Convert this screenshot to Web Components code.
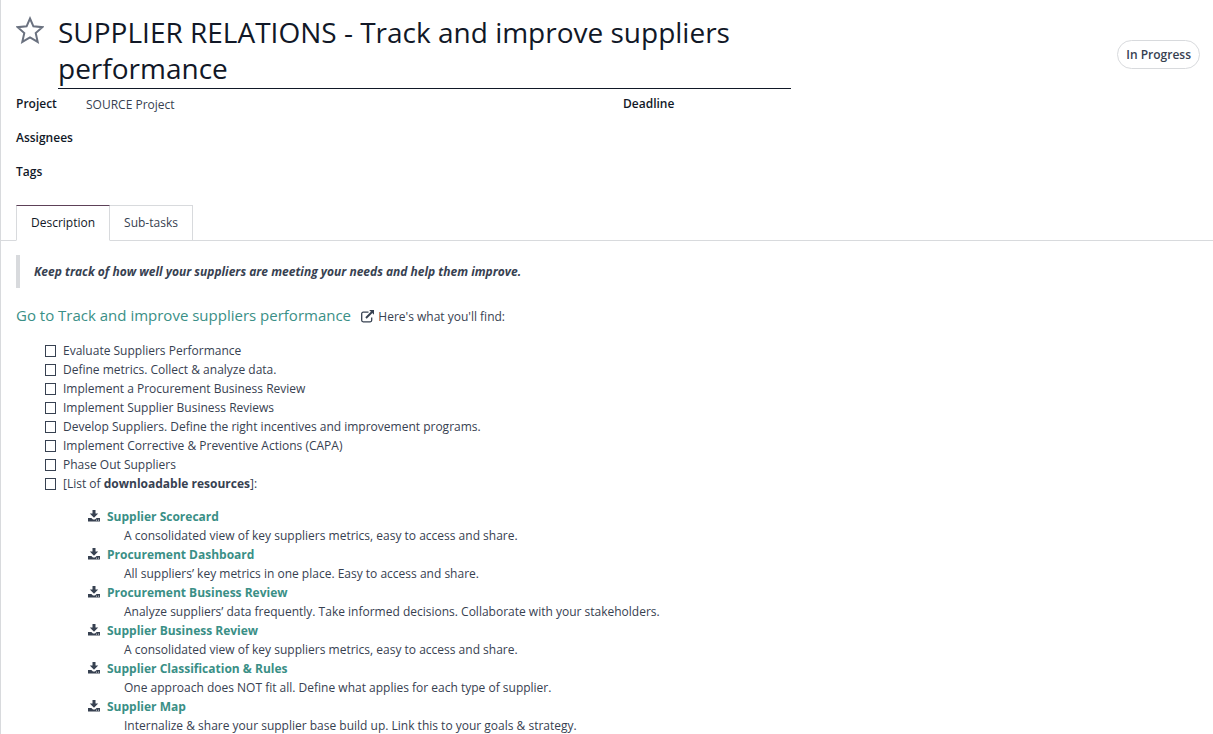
<!DOCTYPE html>
<html lang="en">
<head>
<meta charset="utf-8">
<title>Task</title>
<style>
  body {
    margin: 0;
    background: #fff;
    color: #374151;
    font: 12px/19px "Open Sans", "Noto Sans", sans-serif;
    --ink: #111827;
    --line: #d8dadd;
    --link: #3a8f86;
    --accent: #5d4158;
  }
</style>
</head>
<body>
<task-form></task-form>

<template id="task-form">
  <style>
    :host { display: block; box-sizing: border-box; min-height: 100vh; border-left: 1px solid var(--line); }
    header { display: grid; grid-template-columns: 2fr 1fr; column-gap: 22px; padding: 14px 13px 0 15px; }
    .status { justify-self: end; margin-top: 26px; align-self: start; }
    .groups { display: grid; grid-template-columns: 1fr 1fr; column-gap: 30px; padding: 5px 13px 0 15px; }
    task-tabs { margin-top: 9px; }
    main { display: block; padding: 14px 13px 0 15px; }
    blockquote { margin: 0; padding: 7px 0 7px 14px; border-left: 4px solid var(--line); font-weight: 700; font-style: italic; }
    .intro { margin: 16px 0 13px; line-height: 22px; }
    .intro a { color: var(--link); font-size: 15px; text-decoration: none; }
    .intro svg { width: 14px; height: 13px; margin: 0 0 0 7px; vertical-align: -2px; }
    ul { list-style: none; margin: 0; padding: 0 0 0 29px; }
    .files { padding: 14px 0 0 72px; }
  </style>
  <header>
    <task-title value="SUPPLIER RELATIONS - Track and improve suppliers performance"></task-title>
    <status-pill class="status">In Progress</status-pill>
  </header>
  <div class="groups">
    <div>
      <form-field label="Project">SOURCE Project</form-field>
      <form-field label="Assignees"></form-field>
      <form-field label="Tags"></form-field>
    </div>
    <form-field label="Deadline"></form-field>
  </div>
  <task-tabs></task-tabs>
  <main>
    <blockquote>Keep track of how well your suppliers are meeting your needs and help them improve.</blockquote>
    <p class="intro"><a href="#performance">Go to Track and improve suppliers performance</a>
      <svg viewBox="0 0 14 13" aria-hidden="true"><path d="M7.500 2.200H2.200A1.500 1.500 0 0 0 .700 3.700v6.600A1.500 1.500 0 0 0 2.200 11.800h7A1.500 1.500 0 0 0 10.700 10.300V7.500" fill="none" stroke="#374151" stroke-width="1.300"/><path d="M5 8 11 2" fill="none" stroke="#374151" stroke-width="1.900"/><path d="M8.200 0H13V4.800Z" fill="#374151"/></svg>
      Here's what you'll find:</p>
    <ul>
      <check-item>Evaluate Suppliers Performance</check-item>
      <check-item>Define metrics. Collect &amp; analyze data.</check-item>
      <check-item>Implement a Procurement Business Review</check-item>
      <check-item>Implement Supplier Business Reviews</check-item>
      <check-item>Develop Suppliers. Define the right incentives and improvement programs.</check-item>
      <check-item>Implement Corrective &amp; Preventive Actions (CAPA)</check-item>
      <check-item>Phase Out Suppliers</check-item>
      <check-item>[List of <strong>downloadable resources</strong>]:</check-item>
    </ul>
    <ul class="files">
      <download-item name="Supplier Scorecard">A consolidated view of key suppliers metrics, easy to access and share.</download-item>
      <download-item name="Procurement Dashboard">All suppliers’ key metrics in one place. Easy to access and share.</download-item>
      <download-item name="Procurement Business Review">Analyze suppliers’ data frequently. Take informed decisions. Collaborate with your stakeholders.</download-item>
      <download-item name="Supplier Business Review">A consolidated view of key suppliers metrics, easy to access and share.</download-item>
      <download-item name="Supplier Classification &amp; Rules">One approach does NOT fit all. Define what applies for each type of supplier.</download-item>
      <download-item name="Supplier Map">Internalize &amp; share your supplier base build up. Link this to your goals &amp; strategy.</download-item>
    </ul>
  </main>
</template>

<template id="task-title">
  <style>
    :host { display: flex; gap: 14px; align-items: flex-start; }
    button { flex: none; border: 0; padding: 0; margin-top: 2px; background: none; width: 28px; height: 28px; }
    svg { display: block; width: 28px; height: 28px; }
    textarea { flex: 1; min-width: 0; box-sizing: content-box; height: 74px; margin: 0; padding: 0; border: 0; border-bottom: 1px solid var(--ink); resize: none; overflow: hidden; outline: 0; background: none; color: var(--ink); font: 28px/36px "Open Sans", "Noto Sans", sans-serif; }
  </style>
  <button type="button" aria-label="Priority"><svg viewBox="0 0 28 28"><path d="M14 2.500 17.400 10.300 26.300 11.200 19.700 17 21.700 25.900 14 21.400 6.300 25.900 8.300 17 1.700 11.200 10.600 10.300Z" fill="none" stroke="#6b7280" stroke-width="2"/></svg></button>
  <textarea rows="2" aria-label="Task title" spellcheck="false"></textarea>
</template>

<template id="status-pill">
  <style>
    :host { display: block; }
    button { display: block; height: 29px; padding: 0 8px; border: 1px solid var(--line); border-radius: 15px; background: #fff; color: #374151; font: 600 12px/19px "Open Sans", "Noto Sans", sans-serif; }
  </style>
  <button type="button"><slot></slot></button>
</template>

<template id="form-field">
  <style>
    :host { display: grid; grid-template-columns: 70px 1fr; min-height: 34px; }
    b { font-weight: 600; color: var(--ink); }
    span { padding-top: 1px; }
  </style>
  <b></b><span><slot></slot></span>
</template>

<template id="task-tabs">
  <style>
    :host { display: flex; height: 36px; box-sizing: border-box; padding-left: 15px; box-shadow: inset 0 -1px var(--line); }
    button { box-sizing: border-box; height: 36px; padding: 0 14px 2px; border: 1px solid var(--line); border-left: 0; background: none; color: #374151; font: 12px/19px "Open Sans", "Noto Sans", sans-serif; }
    button[aria-selected="true"] { border-left: 1px solid var(--line); border-top-color: var(--accent); border-bottom-color: #fff; background: #fff; color: var(--ink); }
  </style>
  <button type="button" role="tab" aria-selected="true">Description</button>
  <button type="button" role="tab" aria-selected="false">Sub-tasks</button>
</template>

<template id="check-item">
  <style>
    :host { display: block; }
    label { display: flex; align-items: center; gap: 7px; }
    input { appearance: none; flex: none; box-sizing: border-box; width: 11px; height: 12px; margin: 0; border: 1px solid #374151; background: #fff; }
    input:checked { background: var(--link); }
  </style>
  <label><input type="checkbox"><span><slot></slot></span></label>
</template>

<template id="download-item">
  <style>
    :host { display: grid; grid-template-columns: 12px 1fr; column-gap: 7px; }
    svg { width: 12px; height: 12px; margin-top: 3px; }
    a { justify-self: start; color: var(--link); font-weight: 700; text-decoration: none; }
    p { grid-column: 1 / -1; margin: 0; padding-left: 36px; }
  </style>
  <svg viewBox="0 0 12 12" aria-hidden="true"><path d="M4.500 0h3v3.500H10.200L6 7.700 1.800 3.500h2.700ZM0 8h3.400L5 9.500h2L8.600 8H12V11.500H0Z" fill="#374151"/><path d="M8 9.700h1v.8H8zM10 9.700h1v.8h-1z" fill="#fff"/></svg>
  <a href="#file"></a>
  <p><slot></slot></p>
</template>

<script>
  class Base extends HTMLElement {
    constructor() {
      super();
      const template = document.getElementById(this.localName);
      this.attachShadow({ mode: "open" }).append(template.content.cloneNode(true));
    }
    find(selector) { return this.shadowRoot.querySelector(selector); }
  }

  customElements.define("status-pill", class extends Base {});
  customElements.define("check-item", class extends Base {
    connectedCallback() { this.setAttribute("role", "listitem"); }
  });
  customElements.define("download-item", class extends Base {
    connectedCallback() {
      this.setAttribute("role", "listitem");
      this.find("a").textContent = this.getAttribute("name");
    }
  });
  customElements.define("form-field", class extends Base {
    connectedCallback() { this.find("b").textContent = this.getAttribute("label"); }
  });
  customElements.define("task-title", class extends Base {
    connectedCallback() { this.find("textarea").value = this.getAttribute("value"); }
  });
  customElements.define("task-tabs", class extends Base {
    connectedCallback() {
      this.setAttribute("role", "tablist");
      const tabs = [...this.shadowRoot.querySelectorAll("button")];
      tabs.forEach(tab => tab.addEventListener("click", () =>
        tabs.forEach(other => other.setAttribute("aria-selected", String(other === tab)))));
    }
  });
  customElements.define("task-form", class extends Base {});
</script>
</body>
</html>
